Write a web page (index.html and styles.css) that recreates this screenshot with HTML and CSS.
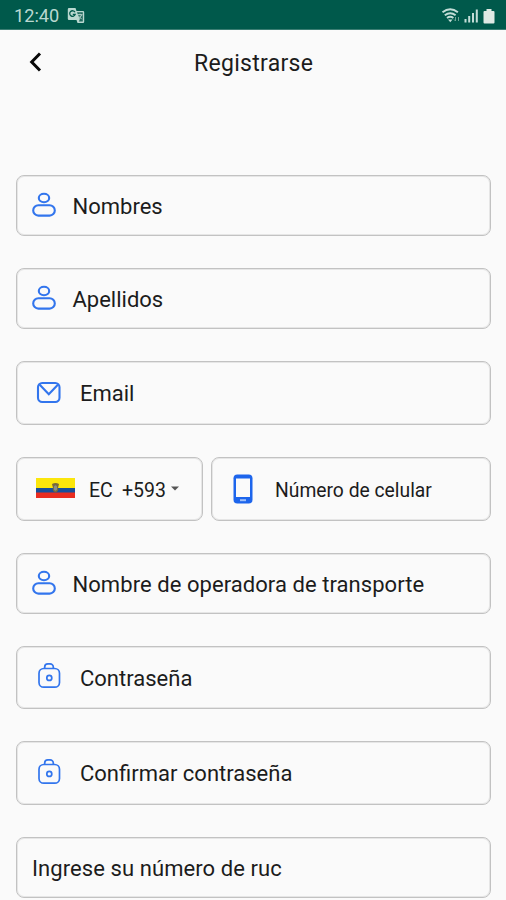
FILE: index.html
```html
<!DOCTYPE html>
<html lang="es">
<head>
<meta charset="utf-8">
<title>Registrarse</title>
<link rel="stylesheet" href="styles.css">
</head>
<body>
<svg width="0" height="0" class="defs">
  <symbol id="user" viewBox="0 0 26 26"><ellipse cx="13" cy="6" rx="5.200" ry="4.200"/><rect x="2.200" y="13.200" width="21.600" height="10.400" rx="5.200"/></symbol>
  <symbol id="lock" viewBox="0 0 26 28"><rect x="3" y="7.500" width="20.500" height="18.700" rx="4.800"/><path d="M8.700 7.500V6a3.200 3.200 0 0 1 3.200-3.200h2.200A3.200 3.200 0 0 1 17.300 6v1.500"/><circle cx="13.300" cy="16.900" r="2.500"/></symbol>
</svg>
<header class="status">
  <span class="time">12:40</span>
  <svg class="translate" width="18" height="17" viewBox="0 0 18 17">
    <path d="M2 1h6.500l1 3H16a1.200 1.200 0 0 1 1.200 1.200v9.600A1.200 1.200 0 0 1 16 16h-5.500l-1-3H2A1.200 1.200 0 0 1 .8 11.800V2.200A1.200 1.200 0 0 1 2 1z" fill="#b9d8d0"/>
    <path d="M8 5.200A2.800 2.800 0 1 0 8.200 7.400H5.800" fill="none" stroke="#00594b" stroke-width="1.300"/>
    <path d="M10 5.300h5.800v9.300h-4l1-2z" fill="#20695d"/>
    <path d="M10.500 7.700h5M13 6.700v1M14.500 8q-.8 2.500-3 4M11.700 9.200l3 3" fill="none" stroke="#b9d8d0" stroke-width="1"/>
  </svg>
  <svg class="signals" width="56" height="18" viewBox="0 0 56 18">
    <g fill="none" stroke="#c3ddd7" stroke-width="1.900"><path d="M1.500 5.300q7.700-6.200 15.400 0M3.800 8.300q5.400-4.300 10.800 0M6 11.100q3.200-2.500 6.400 0"/></g>
    <path d="M7 12.600h4.500l-2.200 2.600z" fill="#c3ddd7"/>
    <path d="M14.500 10v4m-1.500-1.500 1.500 1.500M17.500 14V10" fill="none" stroke="#6da294"/>
    <path d="M24.500 12v3.500M28.200 9v6.500M32 6v9.500M35.800 2.500v13" stroke="#c3ddd7" stroke-width="2"/>
    <path d="M43.500 4H45.500V2h5v2h2q1 0 1 1V15.500q0 1-1 1h-9q-1 0-1-1V5q0-1 1-1z" fill="#dfe9e4"/>
  </svg>
</header>
<nav class="bar">
  <svg class="back" width="13" height="22" viewBox="0 0 13 22"><path d="m11 2.500-8.300 8.500 8.300 8.500"/></svg>
  <h1 class="title">Registrarse</h1>
</nav>
<main class="form">
  <div class="field short"><svg class="icon user"><use href="#user"/></svg><span>Nombres</span></div>
  <div class="field short"><svg class="icon user"><use href="#user"/></svg><span>Apellidos</span></div>
  <div class="field tall email"><svg class="icon mail" viewBox="0 0 26 24"><rect x="2" y="2" width="21.500" height="19" rx="4.200"/><path d="m3.500 3.500 9.300 9.800 9.300-9.800"/></svg><span>Email</span></div>
  <div class="phone">
    <div class="field country">
      <svg class="flag" width="39" height="20" viewBox="0 0 39 20"><path fill="#fbe60c" d="M0 0h39v10H0z"/><path fill="#164e9b" d="M0 10h39v5H0z"/><path fill="#e92c20" d="M0 14.600h39V20H0z"/><path d="M16 6q3.500-2 7 0l-1 4q1 3-2.500 4.500Q16 13 17 10z" fill="#77683c"/><ellipse cx="19.500" cy="10" rx="1.700" ry="2.700" fill="#8a8f88"/></svg>
      <span class="code">EC</span><span class="dial">+593</span>
      <svg class="caret" width="8" height="5" viewBox="0 0 8 5"><path d="M0 .5h8l-4 4z"/></svg>
    </div>
    <div class="field number">
      <svg class="device" width="20" height="30" viewBox="0 0 20 30"><rect x=".5" y=".5" width="19" height="29" rx="3.800" fill="#1d65ec"/><path fill="#fafafa" d="M3 4.500h14v18.500H3z"/><path d="M7 26.200h6" stroke="#9fc0fa" stroke-width="2"/></svg>
      <span class="celular">Número de celular</span>
    </div>
  </div>
  <div class="field short"><svg class="icon user"><use href="#user"/></svg><span class="operator">Nombre de operadora de transporte</span></div>
  <div class="field tall"><svg class="icon lock"><use href="#lock"/></svg><span>Contraseña</span></div>
  <div class="field tall last"><svg class="icon lock"><use href="#lock"/></svg><span>Confirmar contraseña</span></div>
  <div class="field short"><span class="ruc">Ingrese su número de ruc</span></div>
</main>
</body>
</html>
```
FILE: styles.css
```css
* { box-sizing: border-box; }
body { margin: 0; height: 900px; overflow: hidden; background: #fafafa; color: #1c1c1c; font-family: Roboto, sans-serif; }
svg { display: block; flex: none; }
.defs { position: absolute; }
.status { height: 30px; background: #00594b; border-bottom: 1px solid #3b7e73; display: flex; align-items: center; padding: 2px 9px 0 14px; }
.time { color: #b9d8d0; font-size: 18.200px; line-height: 26px; width: 53px; }
.signals { margin-left: auto; }
.bar { height: 145px; display: flex; align-items: flex-start; padding-left: 29px; }
.back { margin-top: 21px; fill: none; stroke: #080808; stroke-width: 3; }
.title { margin: 20px 0 0 152px; font-size: 23px; line-height: 28px; font-weight: 400; letter-spacing: .3px; }
.form { padding: 0 15px 0 16px; display: flex; flex-direction: column; gap: 32px; }
.field { border: 1px solid #c2c2c2; box-shadow: inset 0 0 0 1px #e6e6e6; border-radius: 8px; display: flex; align-items: center; flex: none; font-size: 22px; line-height: 28px; white-space: nowrap; padding-left: 15px; }
.field span { padding-top: 2px; }
.short { height: 61px; }
.tall { height: 63px; padding-left: 19px; }
.email, .last { height: 64px; }
.icon { fill: none; stroke: #3275ed; stroke-width: 2.100; width: 26px; }
.user { height: 26px; margin: 0 15.500px 1px -1px; }
.mail { height: 24px; margin: 0 18px 1px 0; }
.lock { height: 28px; margin: 0 18px 5px 0; stroke-width: 1.700; }
.phone { display: flex; gap: 8px; height: 64px; }
.country { width: 187px; padding-left: 19px; font-size: 19.500px; }
.number { flex: 1; padding-left: 21px; font-size: 19.300px; }
.country span, .number span { padding-top: 3px; }
.flag { margin: 0 14px 2px 0; }
.code { width: 33px; }
.caret { margin: 0 0 1px 5px; fill: #555; }
.device { margin: 0 22px 1px 0; }
.operator { letter-spacing: .06px; }
.ruc { letter-spacing: .08px; }
```
